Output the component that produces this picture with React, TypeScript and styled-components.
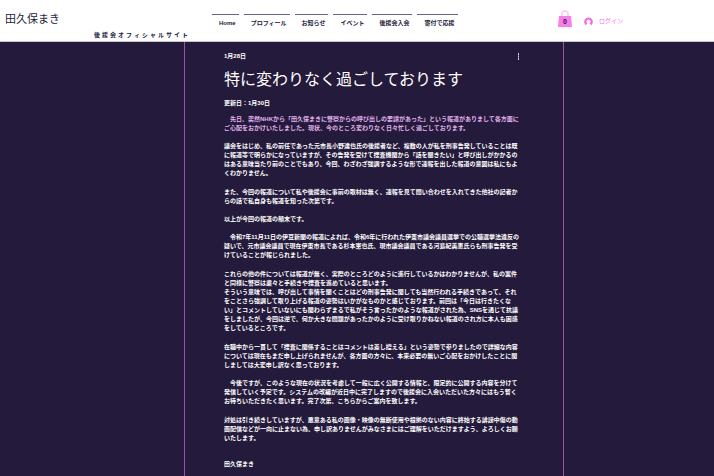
import React from "react";
import styled, { createGlobalStyle } from "styled-components";

const GlobalStyle = createGlobalStyle`
  * { box-sizing: border-box; }
  html, body { margin: 0; background: #241a3b; }
  body {
    font-family: "Liberation Sans", "Noto Sans CJK JP", sans-serif;
    font-size: 6px;
    line-height: 9px;
    color: #ffffff;
    overflow-x: hidden;
  }
`;

const Page = styled.div`
  min-height: 100vh;
  display: flex;
  flex-direction: column;
`;

const Header = styled.header`
  display: flex;
  align-items: flex-start;
  height: 42px;
  background: #ffffff;
  border-bottom: 1px solid #c9c5d0;
  color: #241a3b;
`;

const Brand = styled.div`
  width: 212px;
  padding: 11px 0 0 5px;
`;

const Logo = styled.a`
  display: block;
  font-size: 11px;
  line-height: 16px;
  color: inherit;
  text-decoration: none;
`;

const Tagline = styled.p`
  margin: 3px 0 0 89px;
  font-weight: 700;
  line-height: 10px;
  letter-spacing: 2px;
  white-space: nowrap;
`;

const Nav = styled.nav`
  display: flex;
  gap: 5px;
  padding-top: 14px;
`;

const NavLink = styled.a`
  padding: 4px 3px 0 7px;
  border-top: 1px solid #6d6580;
  font-weight: 700;
  color: inherit;
  text-decoration: none;
  white-space: nowrap;
`;

const Account = styled.div`
  display: flex;
  align-items: flex-start;
  gap: 12px;
  margin: 10px 91px 0 auto;
`;

const PlainButton = styled.button`
  display: flex;
  align-items: center;
  gap: 6px;
  padding: 0;
  border: 0;
  background: none;
  font: inherit;
  color: #f76be6;
  white-space: nowrap;
`;

const LoginButton = styled(PlainButton)`
  margin-top: 7px;
`;

const Main = styled.main`
  flex: 1;
  display: grid;
  grid-template-columns: 184fr 380fr 150fr;
`;

const Column = styled.article`
  grid-column: 2;
  padding: 10px 38px 6px 39px;
  border: solid #9a559f;
  border-width: 0 1px;
`;

const Meta = styled.div`
  display: flex;
  justify-content: space-between;
  align-items: center;
  padding-right: 5px;
  font-weight: 700;
`;

const Title = styled.h1`
  margin: 7px 0;
  font-size: 16px;
  line-height: 24px;
  font-weight: 400;
  white-space: nowrap;
`;

const Updated = styled.p`
  margin: 0 0 7px;
  font-weight: 700;
`;

const Body = styled.div`
  display: flex;
  flex-direction: column;
  gap: 10px;
  font-weight: 700;
`;

const Section = styled.section`
  display: flex;
  flex-direction: column;
  gap: 9px;
`;

const Paragraph = styled.p<{ $accent?: boolean; $signature?: boolean }>`
  margin: ${(p) => (p.$signature ? "8px 0 0" : "0")};
  color: ${(p) => (p.$accent ? "#e3b4f0" : "inherit")};
  white-space: pre;
`;

const navItems = ["Home", "プロフィール", "お知らせ", "イベント", "後援会入会", "寄付で応援"];

const intro = `　先日、突然NHKから「田久保まきに警察からの呼び出しの要請があった」という報道がありまして各方面に
ご心配をおかけいたしました。現状、今のところ変わりなく日々忙しく過ごしております。`;

const sections: string[][] = [
  [
    `議会をはじめ、私の前任であった元市長小野達也氏の後援者など、複数の人が私を刑事告発していることは既
に報道等で明らかになっていますが、その告発を受けて捜査機関から「話を聞きたい」と呼び出しがかかるの
はある意味当たり前のことでもあり、今回、わざわざ強調するような形で速報を出した報道の意図は私にもよ
くわかりません。`,
  ],
  [
    `また、今回の報道について私や後援会に事前の取材は無く、速報を見て問い合わせを入れてきた他社の記者か
らの話で私自身も報道を知った次第です。`,
    `以上が今回の報道の顛末です。`,
    `　令和7年11月11日の伊豆新聞の報道によれば、令和6年に行われた伊東市議会議員選挙での公職選挙法違反の
疑いで、元市議会議員で現在伊東市長である杉本憲也氏、現市議会議員である河島紀美恵氏らも刑事告発を受
けていることが報じられました。`,
  ],
  [
    `これらの他の件については報道が無く、実際のところどのように進行しているかはわかりませんが、私の案件
と同様に警察は粛々と手続きや捜査を進めていると思います。
そういう意味では、呼び出して事情を聞くことはどの刑事告発に関しても当然行われる手続きであって、それ
をことさら強調して取り上げる報道の姿勢はいかがなものかと感じております。前回は「今日は行きたくな
い」とコメントしていないにも関わらずまるで私がそう言ったかのような報道がされた為、SNSを通じて抗議
をしましたが、今回は逆で、何か大きな問題があったかのように受け取りかねない報道のされ方に本人も困惑
をしているところです。`,
  ],
  [
    `在職中から一貫して「捜査に関係することはコメントは差し控える」という姿勢で参りましたので詳細な内容
については現在もまだ申し上げられませんが、各方面の方々に、本来必要の無いご心配をおかけしたことに関
しましては大変申し訳なく思っております。`,
    `　今後ですが、このような現在の状況を考慮して一般に広く公開する情報と、限定的に公開する内容を分けて
発信していく予定です。システムの改編が近日中に完了しますので後援会に入会いただいた方々にはもう暫く
お待ちいただきたく思います。完了次第、こちらからご案内を致します。`,
  ],
  [
    `対処は引き続きしていますが、悪意ある私の画像・映像の無断使用や根拠のない内容に終始する誹謗中傷の動
画配信などが一向に止まない為、申し訳ありませんがみなさまにはご理解をいただけますよう、よろしくお願
いたします。`,
  ],
];

const BagIcon = () => (
  <svg width="14" height="18" viewBox="0 0 14 18" aria-hidden="true">
    <path d="M4 7V3C4 2 5 1 7 1s3 1 3 2v4" fill="none" stroke="#f9a3ed" strokeWidth="1" />
    <path d="M1 6h12L14 17H0z" fill="#f97eea" />
    <text x="7" y="14" textAnchor="middle" fontSize="7" fontWeight="700" fill="#241a3b">0</text>
  </svg>
);

const UserIcon = () => (
  <svg width="9" height="9" viewBox="0 0 18 18" aria-hidden="true">
    <path
      fill="#f76be6"
      fillRule="evenodd"
      d="M9 1a8.500 8.500 0 0 0-7 13.500c.4.8 1 1.500 1.800 2 .5-1.800 1.700-3 3.300-3.600a4 4 0 1 1 3.800 0c1.600.6 2.800 1.800 3.300 3.600.8-.5 1.400-1.200 1.800-2A8.500 8.500 0 0 0 9 1z"
    />
  </svg>
);

const MoreIcon = () => (
  <svg width="3" height="7" viewBox="0 0 3 7" aria-hidden="true">
    <path d="M1 0h1v7H1z" fill="#8f88a0" />
    <path d="M1 0h1v2H1zM1 3h1v1H1zM1 5h1v2H1z" fill="#d5d0de" />
  </svg>
);

export default function App() {
  return (
    <Page>
      <GlobalStyle />
      <Header>
        <Brand>
          <Logo href="#">田久保まき</Logo>
          <Tagline>後援会オフィシャルサイト</Tagline>
        </Brand>
        <Nav>
          {navItems.map((item) => (
            <NavLink key={item} href="#">{item}</NavLink>
          ))}
        </Nav>
        <Account>
          <PlainButton type="button" aria-label="カート"><BagIcon /></PlainButton>
          <LoginButton type="button"><UserIcon />ログイン</LoginButton>
        </Account>
      </Header>
      <Main>
        <Column>
          <Meta>
            <time>1月28日</time>
            <PlainButton type="button" aria-label="その他"><MoreIcon /></PlainButton>
          </Meta>
          <Title>特に変わりなく過ごしております</Title>
          <Updated>更新日：1月30日</Updated>
          <Body>
            <Section>
              <Paragraph $accent>{intro}</Paragraph>
              {sections[0].map((text) => (
                <Paragraph key={text}>{text}</Paragraph>
              ))}
            </Section>
            {sections.slice(1).map((paragraphs, i) => (
              <Section key={i}>
                {paragraphs.map((text) => (
                  <Paragraph key={text}>{text}</Paragraph>
                ))}
                {i === sections.length - 2 && <Paragraph $signature>田久保まき</Paragraph>}
              </Section>
            ))}
          </Body>
        </Column>
      </Main>
    </Page>
  );
}
